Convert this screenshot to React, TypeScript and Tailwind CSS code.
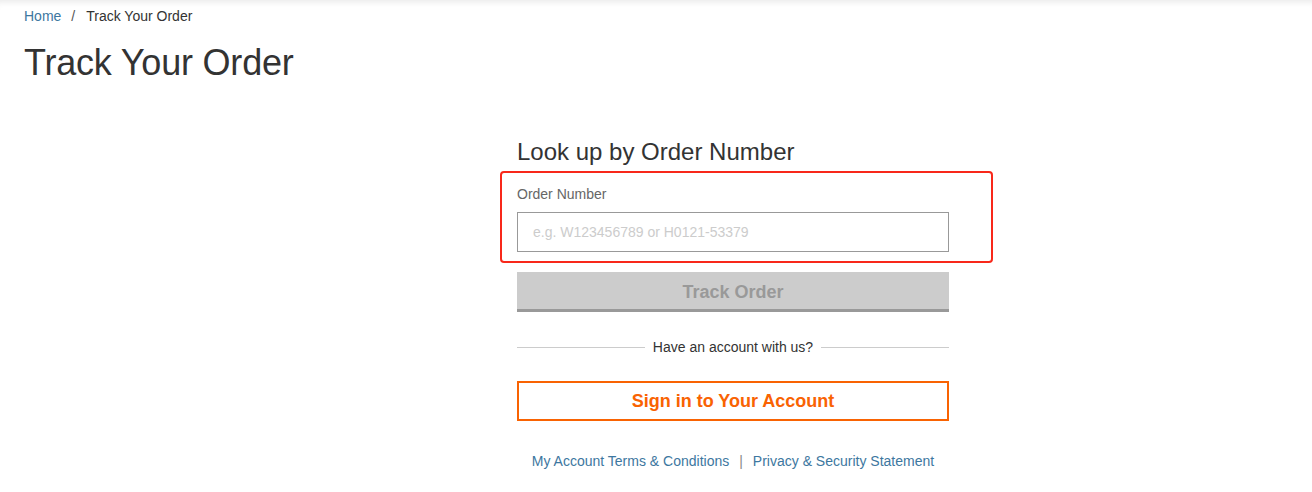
import React from 'react';

const TrackOrderPage = () => {
  return (
    <div
      className="min-h-[492px] bg-white px-6 text-[#333] shadow-[inset_0_7px_6px_-5px_rgba(0,0,0,0.09)]"
      style={{ fontFamily: '"Liberation Sans", Arial, sans-serif' }}
    >
      <nav className="pt-[6px] text-[14px] leading-5">
        <a href="#" className="text-[#3d77a0]">Home</a>
        <span className="ml-[10px] mr-[11px] text-[#555]">/</span>
        <span className="text-[#333]">Track Your Order</span>
      </nav>

      <h1 className="mt-[17px] text-[36px] leading-10 font-normal tracking-[-0.2px] text-[#333]">Track Your Order</h1>

      <div className="ml-[493px] mt-[55px] w-[432px]">
        <h2 className="text-[24px] leading-7 font-normal text-[#333]">Look up by Order Number</h2>

        <div className="relative mt-[18px]">
          <label className="block text-[14px] leading-5 text-[#666]">Order Number</label>
          <input
            type="text"
            placeholder="e.g. W123456789 or H0121-53379"
            className="mt-[8px] block h-10 w-full border border-[#999] px-[15px] text-[14px] outline-none placeholder:text-[#ccc]"
          />
          <div className="pointer-events-none absolute -top-[13px] -bottom-[11px] -left-[17px] -right-[44px] rounded-[4px] border-2 border-[#f8281a]"></div>
        </div>

        <button className="mt-5 block h-10 w-full border-b-[3px] border-[#999] bg-[#ccc] pt-[3px] text-[18px] font-bold text-[#999]">
          Track Order
        </button>

        <div className="mt-[25px] flex items-center gap-2">
          <div className="h-px flex-1 bg-[#ccc]"></div>
          <span className="text-[14px] leading-5 text-[#333]">Have an account with us?</span>
          <div className="h-px flex-1 bg-[#ccc]"></div>
        </div>

        <button className="mt-[24px] block h-10 w-full border-2 border-[#f96302] bg-white pt-px text-[18px] font-bold text-[#f96302]">
          Sign in to Your Account
        </button>

        <div className="mt-[30px] flex items-center justify-center text-[14px] leading-5">
          <a href="#" className="text-[#3d77a0]">My Account Terms &amp; Conditions</a>
          <span className="mx-[10px] text-[#888]">|</span>
          <a href="#" className="text-[#3d77a0]">Privacy &amp; Security Statement</a>
        </div>
      </div>
    </div>
  );
};

export default TrackOrderPage;
